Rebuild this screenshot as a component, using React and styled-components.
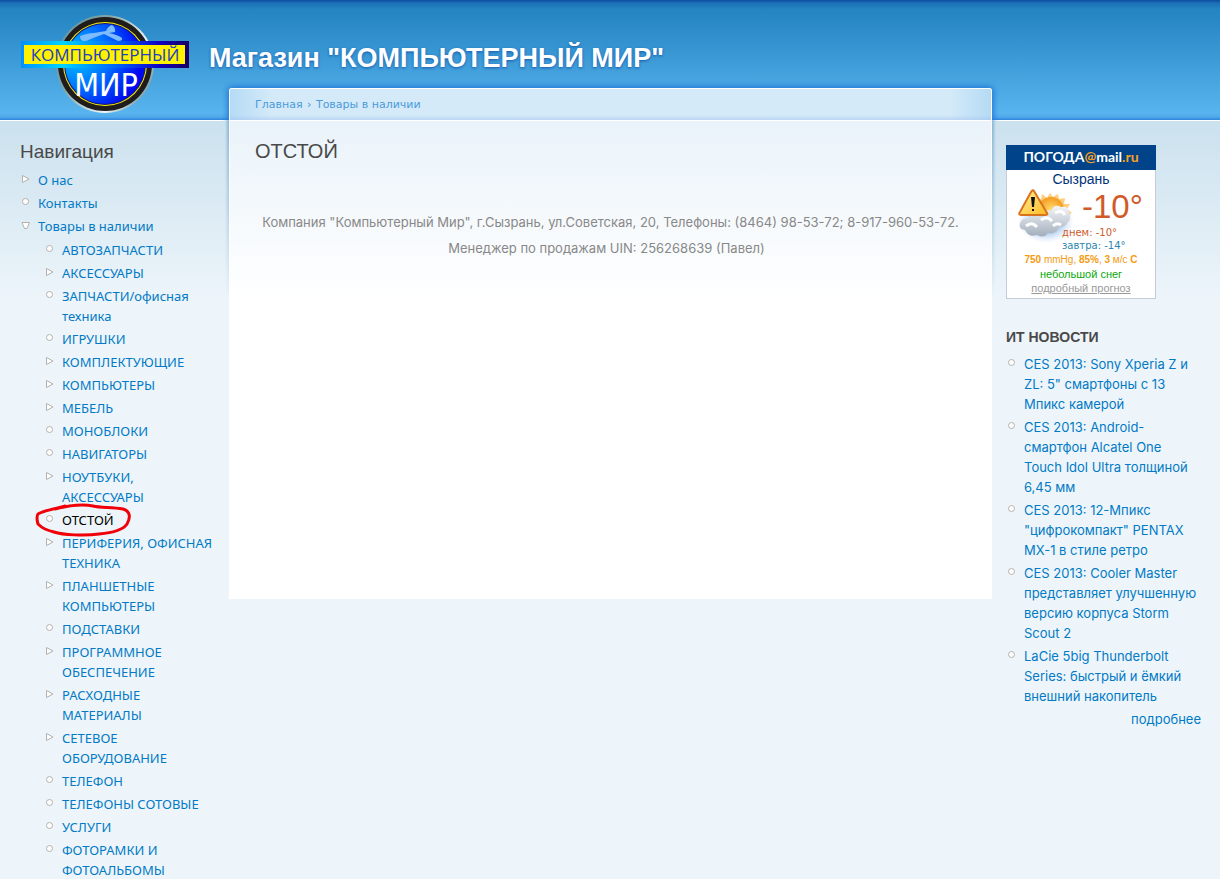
import React from "react";
import styled, { createGlobalStyle, css } from "styled-components";

const GlobalStyle = createGlobalStyle`
    body {
        margin: 0;
        background: #edf5fa;
        color: #494949;
        font: 13px/20px Inter, Verdana, sans-serif;
    }
    a {
        color: #027ac6;
        text-decoration: none;
    }
    a:hover {
        text-decoration: underline;
    }
`;

const Header = styled.header`
    box-sizing: border-box;
    height: 121px;
    display: flex;
    align-items: flex-start;
    padding: 12px 20px 0;
    border-bottom: 1px solid #fff;
    background: linear-gradient(
        #0c4ba0 0,
        #1c6fb6 3px,
        #2385c2 9px,
        #2888c5 20px,
        #58b4ee 113px,
        #4fa9ea 117px,
        #2f84de 120px
    );
`;

const SiteName = styled.h1`
    margin: 30px 0 0 19px;
    font: bold 27px/32px "Liberation Sans", Arial, sans-serif;
    text-shadow: #1659ac 0 1px 3px;
    white-space: nowrap;
    a {
        color: #fff;
    }
`;

const Columns = styled.div`
    display: flex;
    align-items: flex-start;
    background: linear-gradient(#cbe1ee, #edf5fa 180px);
`;

const Sidebar = styled.aside`
    box-sizing: border-box;
    flex: 0 0 ${(props) => props.$width};
    padding: ${(props) => props.$pad};
`;

const SideTitle = styled.h2`
    margin: 0 0 6px;
    font: 19px/24px "Liberation Sans", Arial, sans-serif;
`;

const NewsTitle = styled.h3`
    margin: 28px 0 7px;
    font: bold 14px/20px "Liberation Sans", Arial, sans-serif;
`;

const Main = styled.main`
    flex: 1;
    min-width: 0;
    box-sizing: border-box;
    min-height: 511px;
    margin-top: -33px;
    border: 1px solid #fff;
    border-bottom: 0;
    border-radius: 3px 3px 0 0;
    background: #fff;
    color: #888;
`;

const SideShade = styled.div`
    height: 180px;
    flex: 0 0 4px;
    background: linear-gradient(
        to ${(props) => props.$to},
        rgba(90, 150, 190, 0),
        rgba(90, 150, 190, 0.6)
    );
    mask-image: linear-gradient(#000, transparent);
`;

const Breadcrumb = styled.nav`
    box-sizing: border-box;
    height: 32px;
    padding: 6px 25px 0;
    border-bottom: 1px solid #fff;
    border-radius: 2px 2px 0 0;
    background:
        linear-gradient(transparent 26px, rgba(160, 190, 240, 0.45)),
        linear-gradient(
            to right,
            #b5dbf5,
            #d4eaf8 42px,
            #d4eaf8 calc(100% - 42px),
            #b5dbf5
        );
    box-shadow:
        0 0 0 1px #fff,
        0 0 6px 2px #1b6fd4;
    clip-path: inset(-8px -8px 0);
    color: #3e95d6;
    font: 11px/20px "DejaVu Sans", Verdana, sans-serif;
    a {
        color: #4a9bdc;
    }
`;

const Separator = styled.span`
    padding: 0 1px;
`;

const Content = styled.div`
    box-sizing: border-box;
    min-height: 180px;
    padding: 18px 25px 0;
    background: linear-gradient(#eaf3fa, #fff 180px);
`;

const PageTitle = styled.h2`
    margin: 0 0 49px;
    color: #494949;
    font: 20px/24px "Liberation Sans", Arial, sans-serif;
`;

const Contacts = styled.p`
    margin: 0 0 6px;
    text-align: center;
    margin-right: ${(props) => (props.$short ? "8px" : "0")};
`;

const List = styled.ul`
    margin: 0;
    padding: ${(props) => (props.$nested ? "4px 0 0 24px" : "0")};
    list-style: none;
`;

const Item = styled.li`
    position: relative;
    margin-bottom: 3px;
`;

const Row = styled.div`
    display: flex;
    align-items: flex-start;
`;

const Marker = styled.svg`
    flex: 0 0 10px;
    height: 10px;
    margin: 4px 8px 0 0;
    fill: #fff;
    stroke: #b5b1ac;
`;

const MenuNav = styled.nav`
    font-family: "Noto Sans", Verdana, sans-serif;
`;

const ItemLink = styled.a`
    ${(props) =>
        props.$active &&
        css`
            && {
                color: #000;
            }
        `}
`;

const Scribble = styled.svg`
    position: absolute;
    left: -9px;
    top: -8px;
    width: 98px;
    height: 36px;
    fill: none;
    stroke: #f00008;
    stroke-width: 3;
    stroke-linecap: round;
    pointer-events: none;
`;

const More = styled.div`
    text-align: right;
`;

const Weather = styled.section`
    box-sizing: border-box;
    width: 150px;
    height: 154px;
    border: 1px solid #c5ccd8;
    border-top: 0;
    background: #fff;
    text-align: center;
    font: 10px/14px "Liberation Sans", Arial, sans-serif;
`;

const WeatherHead = styled.div`
    height: 25px;
    margin: 0 -1px;
    background: #004389;
    color: #fff;
    font: bold 14px/23px Lato, "DejaVu Sans", sans-serif;
    span {
        color: #f8a020;
    }
`;

const City = styled.div`
    color: #00327a;
    font-size: 14px;
    line-height: 19px;
`;

const Now = styled.div`
    display: flex;
    height: 64px;
    padding-left: 10px;
    text-align: left;
`;

const WeatherIcon = styled.svg`
    flex: 0 0 57px;
    height: 54px;
    margin-right: -12px;
`;

const Temps = styled.div`
    font: 10px/13px "DejaVu Sans", Verdana, sans-serif;
    white-space: nowrap;
    color: ${(props) => props.$color};
`;

const BigTemp = styled.div`
    padding-left: 20px;
    color: #d05a28;
    font: 33px/36px "Liberation Sans", Arial, sans-serif;
    height: 37px;
`;

const Line = styled.div`
    color: ${(props) => props.$color};
    font-size: ${(props) => props.$size || "10px"};
    white-space: nowrap;
    a {
        color: #999;
        text-decoration: underline;
    }
`;

const menu = [
    { text: "О нас", kind: "right" },
    { text: "Контакты", kind: "dot" },
    {
        text: "Товары в наличии",
        kind: "down",
        children: [
            { text: "АВТОЗАПЧАСТИ", kind: "dot" },
            { text: "АКСЕССУАРЫ", kind: "right" },
            { text: "ЗАПЧАСТИ/офисная техника", kind: "dot" },
            { text: "ИГРУШКИ", kind: "dot" },
            { text: "КОМПЛЕКТУЮЩИЕ", kind: "right" },
            { text: "КОМПЬЮТЕРЫ", kind: "right" },
            { text: "МЕБЕЛЬ", kind: "right" },
            { text: "МОНОБЛОКИ", kind: "dot" },
            { text: "НАВИГАТОРЫ", kind: "dot" },
            { text: "НОУТБУКИ, АКСЕССУАРЫ", kind: "right" },
            { text: "ОТСТОЙ", kind: "dot", active: true },
            { text: "ПЕРИФЕРИЯ, ОФИСНАЯ ТЕХНИКА", kind: "right" },
            { text: "ПЛАНШЕТНЫЕ КОМПЬЮТЕРЫ", kind: "right" },
            { text: "ПОДСТАВКИ", kind: "dot" },
            { text: "ПРОГРАММНОЕ ОБЕСПЕЧЕНИЕ", kind: "right" },
            { text: "РАСХОДНЫЕ МАТЕРИАЛЫ", kind: "right" },
            { text: "СЕТЕВОЕ ОБОРУДОВАНИЕ", kind: "right" },
            { text: "ТЕЛЕФОН", kind: "dot" },
            { text: "ТЕЛЕФОНЫ СОТОВЫЕ", kind: "dot" },
            { text: "УСЛУГИ", kind: "dot" },
            { text: "ФОТОРАМКИ И ФОТОАЛЬБОМЫ", kind: "dot" },
        ],
    },
];

const news = [
    'CES 2013: Sony Xperia Z и ZL: 5" смартфоны с 13 Мпикс камерой',
    "CES 2013: Android-смартфон Alcatel One Touch Idol Ultra толщиной 6,45 мм",
    'CES 2013: 12-Мпикс "цифрокомпакт" PENTAX MX-1 в стиле ретро',
    "CES 2013: Cooler Master представляет улучшенную версию корпуса Storm Scout 2",
    "LaCie 5big Thunderbolt Series: быстрый и ёмкий внешний накопитель",
];

const Bullet = ({ kind }) => (
    <Marker viewBox="0 0 10 10" aria-hidden="true">
        {kind === "dot" && <circle cx="5.5" cy="4.5" r="3" />}
        {kind === "right" && <path d="M2.5 1.5V8.5L9 5Z" />}
        {kind === "down" && <path d="M2 2.5H9.5L7 8.5H4.5Z" />}
    </Marker>
);

const MenuList = ({ items, nested }) => (
    <List $nested={nested}>
        {items.map((item) => (
            <Item key={item.text}>
                <Row>
                    <Bullet kind={item.kind} />
                    <ItemLink href="#" $active={item.active}>
                        {item.text}
                    </ItemLink>
                </Row>
                {item.active && (
                    <Scribble viewBox="0 0 98 36" aria-hidden="true">
                        <path d="M30 4C17 7 8 9 3 12C1 15 2 18 3 22C8 27 12 28 19 30C28 33 50 34 64 32C76 31 88 28 92 22C96 15 95 9 88 7C76 5 66 6 58 4C48 2 36 3 20 7" />
                    </Scribble>
                )}
                {item.children && <MenuList items={item.children} nested />}
            </Item>
        ))}
    </List>
);

const Logo = () => (
    <svg width="170" height="104" viewBox="20 12 170 104" role="img" aria-label="Компьютерный мир">
        <defs>
            <linearGradient id="ring" x1="0" y1="0" x2="1" y2="0.6">
                <stop offset="0" stopColor="#5f8f9c" />
                <stop offset="0.4" stopColor="#7fa5a8" />
                <stop offset="0.8" stopColor="#eef6f8" />
                <stop offset="1" stopColor="#86aab0" />
            </linearGradient>
            <radialGradient id="ball" cx="0.15" cy="0.4" r="0.8">
                <stop offset="0" stopColor="#00c4ff" />
                <stop offset="0.5" stopColor="#0070ff" />
                <stop offset="1" stopColor="#0008f0" />
            </radialGradient>
            <linearGradient id="plate">
                <stop offset="0" stopColor="#0090ff" />
                <stop offset="0.25" stopColor="#00d4ff" />
                <stop offset="0.6" stopColor="#0058f8" />
                <stop offset="0.82" stopColor="#1000c0" />
                <stop offset="1" stopColor="#180060" />
            </linearGradient>
        </defs>
        <circle cx="105" cy="64" r="49" fill="url(#ring)" />
        <circle cx="105" cy="64" r="47" fill="#201c1c" />
        <circle cx="105" cy="64" r="42" fill="#fff200" />
        <circle cx="105" cy="64" r="41" fill="#101878" />
        <circle cx="105" cy="64" r="40" fill="url(#ball)" />
        <path
            d="M80 36Q88 33 94 33L106 31Q108 26 112 25Q116 28 115 32L109 33Q118 35 122 38Q123 41 118 41Q112 38 104 34Q95 37 86 41Q80 42 80 36Z"
            fill="#7fbcff"
        />
        <rect x="21" y="41" width="168" height="27" fill="url(#plate)" />
        <rect x="24" y="45" width="161" height="19" fill="#fff200" />
        <text
            x="105"
            y="61"
            textAnchor="middle"
            fontFamily="'Open Sans', sans-serif"
            fontSize="17"
            fill="#2040c0"
        >
            КОМПЬЮТЕРНЫЙ
        </text>
        <text
            x="106"
            y="96"
            textAnchor="middle"
            fontFamily="'DejaVu Sans Condensed', 'DejaVu Sans', sans-serif"
            fontSize="32"
            fill="#fff"
        >
            МИР
        </text>
    </svg>
);

const SnowIcon = () => (
    <WeatherIcon viewBox="0 0 57 54" aria-hidden="true">
        <defs>
            <radialGradient id="halo">
                <stop offset="0.4" stopColor="#8fb8e8" />
                <stop offset="1" stopColor="#c8ddf5" stopOpacity="0" />
            </radialGradient>
            <radialGradient id="sun">
                <stop offset="0" stopColor="#ffe070" />
                <stop offset="1" stopColor="#f59a20" />
            </radialGradient>
            <linearGradient id="cloud" x1="0" y1="0" x2="0" y2="1">
                <stop offset="0" stopColor="#f4f6f8" />
                <stop offset="1" stopColor="#a2aebc" />
            </linearGradient>
            <linearGradient id="warn" x1="0" y1="0" x2="1" y2="1">
                <stop offset="0" stopColor="#fff3a0" />
                <stop offset="1" stopColor="#ffb820" />
            </linearGradient>
        </defs>
        <ellipse cx="29" cy="33" rx="28" ry="21" fill="url(#halo)" />
        <path
            d="M33 4L36 8L41 5L42 10L48 9L47 15L53 15L50 20L55 24L50 27L53 32H14L17 13L24 10L25 5L30 9Z"
            fill="#ffce7c"
        />
        <circle cx="34" cy="21" r="13" fill="url(#sun)" />
        <path
            d="M8 41Q1 40 3 34Q5 28 12 30Q15 22 24 25Q28 19 34 22Q37 14 44 18Q52 17 52 23Q55 28 51 33Q48 39 42 38Q39 46 31 44Q27 50 20 46Q12 49 8 41Z"
            fill="url(#cloud)"
        />
        <path d="M24 31Q30 26 35 32M9 37Q15 32 20 38M38 24Q45 20 48 26M36 37Q40 33 44 36" fill="none" stroke="#fff" strokeWidth="3" />
        <path d="M17 2L30 24Q31 26 28 26H4Q1 26 3 23L14 3Q16 0 17 2Z" fill="url(#warn)" stroke="#d9731c" strokeWidth="2" />
        <path d="M14 8H18L17 18H15ZM15 20H17V22H15Z" fill="#111" />
    </WeatherIcon>
);

const WeatherBox = () => (
    <Weather>
        <WeatherHead>
            ПОГОДА<span>@</span>mail<span>.ru</span>
        </WeatherHead>
        <City>Сызрань</City>
        <Now>
            <SnowIcon />
            <div>
                <BigTemp>-10°</BigTemp>
                <Temps $color="#cc5c2b">днем: -10°</Temps>
                <Temps $color="#2a86b0">завтра: -14°</Temps>
            </div>
        </Now>
        <Line $color="#f59b10">
            <b>750</b> mmHg, <b>85%</b>, <b>3</b> м/с <b>C</b>
        </Line>
        <Line $color="#0aa80a" $size="11px">
            небольшой снег
        </Line>
        <Line $size="11px">
            <a href="#">подробный прогноз</a>
        </Line>
    </Weather>
);

export default function App() {
    return (
        <>
            <GlobalStyle />
            <Header>
                <Logo />
                <SiteName>
                    <a href="#">Магазин "КОМПЬЮТЕРНЫЙ МИР"</a>
                </SiteName>
            </Header>
            <Columns>
                <Sidebar $width="225px" $pad="19px 10px 0 20px">
                    <SideTitle>Навигация</SideTitle>
                    <MenuNav>
                        <MenuList items={menu} />
                    </MenuNav>
                </Sidebar>
                <SideShade $to="right" />
                <Main>
                    <Breadcrumb>
                        <a href="#">Главная</a> <Separator>›</Separator>{" "}
                        <a href="#">Товары в наличии</a>
                    </Breadcrumb>
                    <Content>
                        <PageTitle>ОТСТОЙ</PageTitle>
                        <Contacts>
                            Компания "Компьютерный Мир", г.Сызрань, ул.Советская, 20, Телефоны: (8464)
                            98-53-72; 8-917-960-53-72.
                        </Contacts>
                        <Contacts $short>Менеджер по продажам UIN: 256268639 (Павел)</Contacts>
                    </Content>
                </Main>
                <SideShade $to="left" />
                <Sidebar $width="224px" $pad="24px 19px 0 10px">
                    <WeatherBox />
                    <NewsTitle>ИТ НОВОСТИ</NewsTitle>
                    <List>
                        {news.map((title) => (
                            <Item key={title}>
                                <Row>
                                    <Bullet kind="dot" />
                                    <ItemLink href="#">{title}</ItemLink>
                                </Row>
                            </Item>
                        ))}
                    </List>
                    <More>
                        <a href="#">подробнее</a>
                    </More>
                </Sidebar>
            </Columns>
        </>
    );
}
